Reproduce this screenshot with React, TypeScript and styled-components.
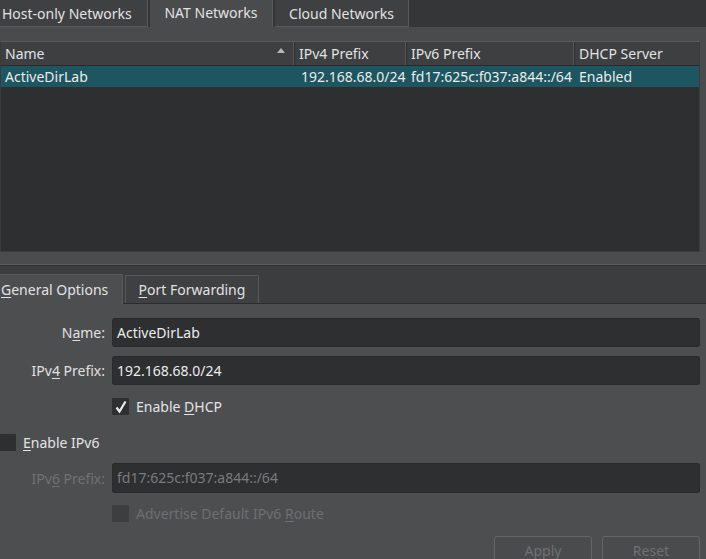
import styled, { createGlobalStyle } from "styled-components";

const GlobalStyle = createGlobalStyle`
  html, body {
    margin: 0;
    padding: 0;
    background: #4d4e50;
  }
  body {
    font-family: "Noto Sans", "Open Sans", sans-serif;
    font-size: 14px;
    color: #e2e2e2;
  }
  u {
    text-underline-offset: 2px;
  }
`;

// Window shell
const Window = styled.div`
  width: 706px;
  height: 559px;
  overflow: hidden;
  display: flex;
  flex-direction: column;
  background: #4d4e50;
`;

// Top tab bar
const TopTabBar = styled.div`
  height: 27px;
  flex-shrink: 0;
  display: flex;
  gap: 2px;
  background: #353638;
`;

const TopTab = styled.div<{ $active?: boolean; $w: number; $left?: boolean }>`
  width: ${(p) => p.$w}px;
  height: 27px;
  box-sizing: border-box;
  display: flex;
  align-items: center;
  justify-content: ${(p) => (p.$left ? "flex-start" : "center")};
  padding-left: ${(p) => (p.$left ? "2px" : "0")};
  padding-bottom: ${(p) => (p.$active ? "3px" : "0")};
  background: ${(p) => (p.$active ? "#4a4b4d" : "#3f4042")};
  border-right: 1px solid #58595b;
  border-bottom: ${(p) => (p.$active ? "none" : "1px solid #58595b")};
  white-space: nowrap;
`;

// Network table
const TableArea = styled.div`
  padding: 14px 6px 0 0;
  flex-shrink: 0;
  background: #4a4b4d;
`;

const Table = styled.div`
  height: 209px;
  border: 1px solid #3a3b3d;
  border-top-color: #5a5b5d;
  background: #2e2f31;
  display: flex;
  flex-direction: column;
`;

const HeaderRow = styled.div`
  height: 23px;
  display: flex;
  background: #3e3f41;
  border-bottom: 1px solid #29292b;
`;

const HeaderCell = styled.div<{ $w?: number }>`
  ${(p) => (p.$w ? `width: ${p.$w}px;` : "flex: 1;")}
  box-sizing: border-box;
  display: flex;
  align-items: center;
  justify-content: space-between;
  padding: 0 4px 1px 4px;
  border-right: 1px solid #2c2d2f;
  box-shadow: inset -1px 0 0 #58595b;
  white-space: nowrap;
  &:last-child {
    border-right: none;
    box-shadow: none;
  }
`;

const SortArrow = styled.span`
  width: 0;
  height: 0;
  border-left: 4px solid transparent;
  border-right: 4px solid transparent;
  border-bottom: 5px solid #b8b8b8;
  margin: 0 5px 6px 0;
`;

const DataRow = styled.div<{ $selected?: boolean }>`
  height: 21px;
  display: flex;
  align-items: center;
  background: ${(p) => (p.$selected ? "#1d5560" : "transparent")};
  color: #ececec;
`;

const DataCell = styled.div<{ $w?: number; $pad?: number }>`
  ${(p) => (p.$w ? `width: ${p.$w}px;` : "flex: 1;")}
  box-sizing: border-box;
  padding-left: ${(p) => p.$pad ?? 4}px;
  white-space: nowrap;
`;

// Splitter between table and details
const Splitter = styled.div`
  height: 12px;
  flex-shrink: 0;
  background: #4b4c4e;
  border-bottom: 1px solid #5d5e60;
  box-shadow: 0 1px 0 #2f3032;
`;

// Lower tab bar
const SubTabBar = styled.div`
  height: 37px;
  margin-top: 1px;
  flex-shrink: 0;
  display: flex;
  align-items: flex-end;
  gap: 2px;
  background: #3c3d3f;
  border-bottom: 1px solid #2b2c2e;
`;

const SubTab = styled.div<{ $active?: boolean; $w: number }>`
  width: ${(p) => p.$w}px;
  height: ${(p) => (p.$active ? "30px" : "28px")};
  box-sizing: border-box;
  display: flex;
  align-items: center;
  justify-content: ${(p) => (p.$active ? "flex-start" : "center")};
  padding-left: ${(p) => (p.$active ? "1px" : "0")};
  background: ${(p) => (p.$active ? "#4d4e50" : "#3f4042")};
  border: 1px solid #58595b;
  border-left: ${(p) => (p.$active ? "none" : "1px solid #58595b")};
  border-bottom: none;
  border-radius: 0 2px 0 0;
  margin-bottom: ${(p) => (p.$active ? "-1px" : "0")};
  white-space: nowrap;
`;

// Form
const Form = styled.div`
  flex: 1;
  display: flex;
  flex-direction: column;
  padding: 14px 6px 0 0;
`;

const Row = styled.div<{ $mt?: number; $h: number }>`
  height: ${(p) => p.$h}px;
  margin-top: ${(p) => p.$mt ?? 0}px;
  display: flex;
  align-items: center;
`;

const Label = styled.label<{ $disabled?: boolean }>`
  width: 112px;
  flex-shrink: 0;
  box-sizing: border-box;
  padding-right: 7px;
  text-align: right;
  color: ${(p) => (p.$disabled ? "#707173" : "#e0e0e0")};
  white-space: nowrap;
`;

const Input = styled.div<{ $disabled?: boolean }>`
  flex: 1;
  height: 100%;
  box-sizing: border-box;
  display: flex;
  align-items: center;
  padding: 0 4px 1px;
  background: #2e2f31;
  border: 1px solid #2a2b2d;
  border-top-color: #262729;
  border-radius: 3px;
  color: ${(p) => (p.$disabled ? "#7a7b7d" : "#ececec")};
`;

const CheckLine = styled.div<{ $indent: number }>`
  display: flex;
  align-items: center;
  gap: 7px;
  margin-left: ${(p) => p.$indent}px;
`;

const Box = styled.span<{ $disabled?: boolean }>`
  width: 17px;
  height: 17px;
  flex-shrink: 0;
  display: flex;
  align-items: center;
  justify-content: center;
  background: ${(p) => (p.$disabled ? "#3d3e40" : "#2e2f31")};
  border-radius: 1px;
`;

const CheckText = styled.span<{ $disabled?: boolean }>`
  color: ${(p) => (p.$disabled ? "#6e6f71" : "#e4e4e4")};
  white-space: nowrap;
`;

const ButtonBar = styled.div`
  margin-top: 14px;
  display: flex;
  justify-content: flex-end;
  gap: 10px;
`;

const Button = styled.button`
  width: 98px;
  height: 30px;
  box-sizing: border-box;
  background: #4a4b4d;
  border: 1px solid #646567;
  border-radius: 3px;
  font: inherit;
  color: #6f7072;
  padding: 0 0 2px;
`;

const Check = () => (
  <svg width="14" height="14" viewBox="0 0 14 14">
    <path d="M2.5 7.5 L5.5 11.5 L11.5 1.5" fill="none" stroke="#ececec" strokeWidth="2.2" />
  </svg>
);

const columns = [
  { title: "Name", w: 294 },
  { title: "IPv4 Prefix", w: 112 },
  { title: "IPv6 Prefix", w: 168 },
  { title: "DHCP Server" },
];

const network = ["ActiveDirLab", "192.168.68.0/24", "fd17:625c:f037:a844::/64", "Enabled"];

const App = () => {
  return (
    <Window>
      <GlobalStyle />
      <TopTabBar>
        <TopTab $w={148} $left>Host-only Networks</TopTab>
        <TopTab $w={123} $active>NAT Networks</TopTab>
        <TopTab $w={134}>Cloud Networks</TopTab>
      </TopTabBar>

      <TableArea>
        <Table>
          <HeaderRow>
            {columns.map((c, i) => (
              <HeaderCell key={c.title} $w={c.w}>
                <span>{c.title}</span>
                {i === 0 && <SortArrow />}
              </HeaderCell>
            ))}
          </HeaderRow>
          <DataRow $selected>
            {network.map((v, i) => (
              <DataCell key={v} $w={columns[i].w} $pad={i === 1 ? 6 : 4}>
                {v}
              </DataCell>
            ))}
          </DataRow>
        </Table>
      </TableArea>

      <Splitter />

      <SubTabBar>
        <SubTab $w={123} $active>
          <span>
            <u>G</u>eneral Options
          </span>
        </SubTab>
        <SubTab $w={134}>
          <span>
            <u>P</u>ort Forwarding
          </span>
        </SubTab>
      </SubTabBar>

      <Form>
        <Row $h={29}>
          <Label>
            N<u>a</u>me:
          </Label>
          <Input>ActiveDirLab</Input>
        </Row>
        <Row $h={29} $mt={9}>
          <Label>
            IPv<u>4</u> Prefix:
          </Label>
          <Input>192.168.68.0/24</Input>
        </Row>
        <Row $h={17} $mt={13}>
          <CheckLine $indent={112}>
            <Box>
              <Check />
            </Box>
            <CheckText>
              Enable <u>D</u>HCP
            </CheckText>
          </CheckLine>
        </Row>
        <Row $h={17} $mt={19}>
          <CheckLine $indent={-1}>
            <Box />
            <CheckText>
              <u>E</u>nable IPv6
            </CheckText>
          </CheckLine>
        </Row>
        <Row $h={30} $mt={12}>
          <Label $disabled>
            IPv<u>6</u> Prefix:
          </Label>
          <Input $disabled>fd17:625c:f037:a844::/64</Input>
        </Row>
        <Row $h={17} $mt={12}>
          <CheckLine $indent={112}>
            <Box $disabled />
            <CheckText $disabled>
              Advertise Default IPv6 <u>R</u>oute
            </CheckText>
          </CheckLine>
        </Row>
        <ButtonBar>
          <Button disabled>Apply</Button>
          <Button disabled>Reset</Button>
        </ButtonBar>
      </Form>
    </Window>
  );
};

export default App;
